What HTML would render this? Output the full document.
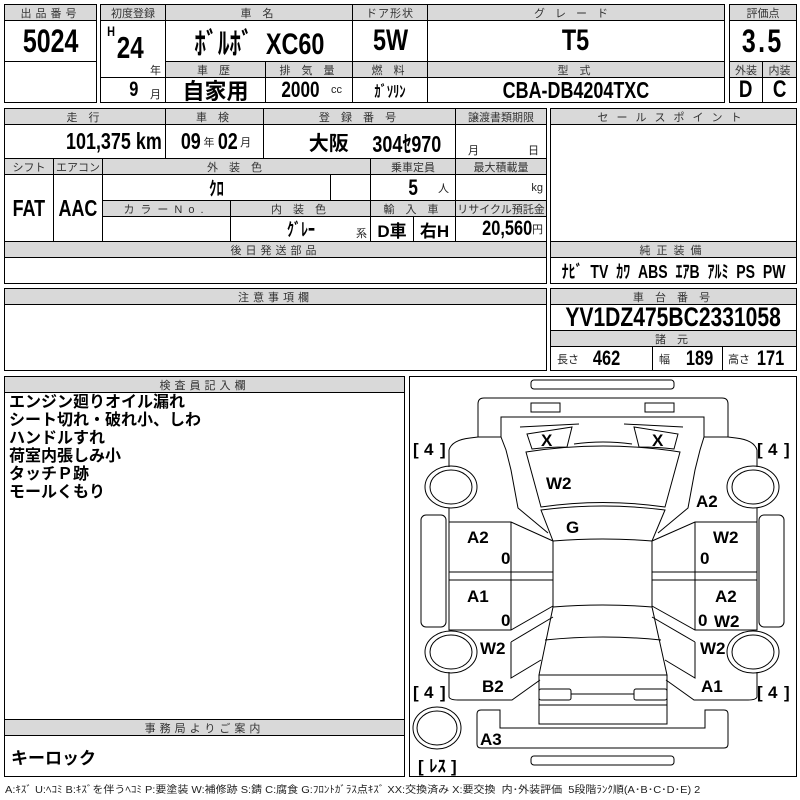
<!DOCTYPE html>
<html><head><meta charset="utf-8"><style>
body{margin:0;width:800px;height:800px;background:#fff;position:relative;overflow:hidden;font-family:"Liberation Sans","Noto Sans CJK JP",sans-serif}
.c{position:absolute;border:1px solid #000;box-sizing:border-box;display:flex;align-items:center;justify-content:center;overflow:visible;white-space:nowrap;background:#fff}
.h{background:#d9d9d9;font-size:11px;color:#333;letter-spacing:4px}
.v{font-family:"Liberation Sans","Noto Sans CJK JP",sans-serif;font-weight:bold;color:#000}
i{font-style:normal;display:inline-block;transform:scaleX(.78);transform-origin:center}
i.r{transform-origin:right center}
.a{position:absolute;white-space:nowrap}
.j{font-family:"Liberation Sans","Noto Sans CJK JP",sans-serif;font-weight:bold}
.s{font-size:11px;font-weight:normal;color:#222}
svg text{font-family:"Liberation Sans","Noto Sans CJK JP",sans-serif;font-weight:bold;font-size:17px}
</style></head><body>

<div class="c h" style="left:4px;top:4px;width:93px;height:17px">出品番号</div>
<div class="c v" style="left:4px;top:20px;width:93px;height:42px;font-size:32px"><i>5024</i></div>
<div class="c" style="left:4px;top:61px;width:93px;height:42px"></div>

<div class="c h" style="left:100px;top:4px;width:66px;height:17px;letter-spacing:0">初度登録</div>
<div class="c h" style="left:165px;top:4px;width:188px;height:17px">車 名</div>
<div class="c h" style="left:352px;top:4px;width:76px;height:17px;letter-spacing:1px">ドア形状</div>
<div class="c h" style="left:427px;top:4px;width:298px;height:17px;letter-spacing:10px">グレード</div>
<div class="c" style="left:100px;top:20px;width:66px;height:58px"></div>
<div class="a v" style="left:106px;top:23px;font-size:14px"><i>H</i></div>
<div class="a v" style="left:113px;top:30px;font-size:31px"><i>24</i></div>
<div class="a s" style="left:150px;top:62px">年</div>
<div class="c" style="left:100px;top:77px;width:66px;height:26px"></div>
<div class="a v" style="left:128px;top:78px;font-size:21px"><i>9</i></div>
<div class="a s" style="left:150px;top:86px">月</div>
<div class="c v" style="left:165px;top:20px;width:188px;height:42px;font-size:30px"><i>ﾎﾞﾙﾎﾞ&nbsp;&nbsp;XC60</i></div>
<div class="c v" style="left:352px;top:20px;width:76px;height:42px;font-size:30px"><i>5W</i></div>
<div class="c v" style="left:427px;top:20px;width:298px;height:42px;font-size:30px"><i>T5</i></div>
<div class="c h" style="left:165px;top:61px;width:101px;height:17px">車 歴</div>
<div class="c h" style="left:265px;top:61px;width:88px;height:17px">排 気 量</div>
<div class="c h" style="left:352px;top:61px;width:76px;height:17px">燃 料</div>
<div class="c h" style="left:427px;top:61px;width:298px;height:17px">型 式</div>
<div class="c j" style="left:165px;top:77px;width:101px;height:26px;font-size:22px">自家用</div>
<div class="c v" style="left:265px;top:77px;width:88px;height:26px;font-size:22px"><i>2000</i>&nbsp;<span class="s">cc</span></div>
<div class="c v" style="left:352px;top:77px;width:76px;height:26px;font-size:16px"><i>ｶﾞｿﾘﾝ</i></div>
<div class="c v" style="left:427px;top:77px;width:298px;height:26px;font-size:23px"><i>CBA-DB4204TXC</i></div>

<div class="c h" style="left:729px;top:4px;width:68px;height:17px;letter-spacing:0">評価点</div>
<div class="c v" style="left:729px;top:20px;width:68px;height:42px;font-size:32px;letter-spacing:3px"><i>3.5</i></div>
<div class="c h" style="left:729px;top:61px;width:34px;height:17px;letter-spacing:0">外装</div>
<div class="c h" style="left:762px;top:61px;width:35px;height:17px;letter-spacing:0">内装</div>
<div class="c v" style="left:729px;top:77px;width:34px;height:26px;font-size:24px"><i>D</i></div>
<div class="c v" style="left:762px;top:77px;width:35px;height:26px;font-size:24px"><i>C</i></div>

<div class="c h" style="left:4px;top:108px;width:162px;height:17px">走 行</div>
<div class="c h" style="left:165px;top:108px;width:99px;height:17px">車 検</div>
<div class="c h" style="left:263px;top:108px;width:193px;height:17px">登 録 番 号</div>
<div class="c h" style="left:455px;top:108px;width:92px;height:17px;letter-spacing:0">譲渡書類期限</div>
<div class="c v" style="left:4px;top:124px;width:162px;height:35px;font-size:23px;justify-content:flex-end;padding-right:3px"><i class="r">101,375 km</i></div>
<div class="c v" style="left:165px;top:124px;width:99px;height:35px;font-size:23px"><i>09</i><span class="s">年</span><i>02</i><span class="s">月</span></div>
<div class="c j" style="left:263px;top:124px;width:193px;height:35px;font-size:20px;justify-content:flex-end;padding-right:14px">大阪<span class="v" style="font-size:23px;margin-left:4px"><i class="r">304ｾ970</i></span></div>
<div class="c" style="left:455px;top:124px;width:92px;height:35px"></div>
<div class="a s" style="left:468px;top:142px">月</div><div class="a s" style="left:528px;top:142px">日</div>

<div class="c h" style="left:4px;top:158px;width:50px;height:17px;letter-spacing:0">シフト</div>
<div class="c h" style="left:53px;top:158px;width:50px;height:17px;letter-spacing:0">エアコン</div>
<div class="c h" style="left:102px;top:158px;width:269px;height:17px">外 装 色</div>
<div class="c h" style="left:370px;top:158px;width:86px;height:17px;letter-spacing:0">乗車定員</div>
<div class="c h" style="left:455px;top:158px;width:92px;height:17px;letter-spacing:0">最大積載量</div>
<div class="c v" style="left:4px;top:174px;width:50px;height:68px;font-size:23px"><i>FAT</i></div>
<div class="c v" style="left:53px;top:174px;width:50px;height:68px;font-size:23px"><i>AAC</i></div>
<div class="c v" style="left:102px;top:174px;width:229px;height:27px;font-size:19px"><i>ｸﾛ</i></div>
<div class="c" style="left:330px;top:174px;width:41px;height:27px"></div>
<div class="c v" style="left:370px;top:174px;width:86px;height:27px;font-size:22px;justify-content:flex-end;padding-right:6px"><i>5</i>&nbsp;&nbsp;&nbsp;<span class="s">人</span></div>
<div class="c" style="left:455px;top:174px;width:92px;height:27px;justify-content:flex-end;padding-right:3px"><span class="s">kg</span></div>
<div class="c h" style="left:102px;top:200px;width:129px;height:17px;letter-spacing:6px">カラーNo.</div>
<div class="c h" style="left:230px;top:200px;width:141px;height:17px">内 装 色</div>
<div class="c h" style="left:370px;top:200px;width:86px;height:17px">輸 入 車</div>
<div class="c h" style="left:455px;top:200px;width:92px;height:17px;letter-spacing:0">リサイクル預託金</div>
<div class="c" style="left:102px;top:216px;width:129px;height:26px"></div>
<div class="c v" style="left:230px;top:216px;width:141px;height:26px;font-size:18px"><i>ｸﾞﾚｰ</i></div>
<div class="a s" style="left:356px;top:225px">系</div>
<div class="c j" style="left:370px;top:216px;width:44px;height:26px;font-size:17px">D車</div>
<div class="c j" style="left:413px;top:216px;width:43px;height:26px;font-size:17px">右H</div>
<div class="c v" style="left:455px;top:216px;width:92px;height:26px;font-size:21px;justify-content:flex-end;padding-right:3px"><i class="r">20,560</i><span class="s">円</span></div>
<div class="c h" style="left:4px;top:241px;width:543px;height:17px">後日発送部品</div>
<div class="c" style="left:4px;top:257px;width:543px;height:27px"></div>

<div class="c h" style="left:550px;top:108px;width:247px;height:17px;letter-spacing:8px">セールスポイント</div>
<div class="c" style="left:550px;top:124px;width:247px;height:118px"></div>
<div class="c h" style="left:550px;top:241px;width:247px;height:17px;letter-spacing:6px">純正装備</div>
<div class="c v" style="left:550px;top:257px;width:247px;height:27px;font-size:18px;word-spacing:5px"><i>ﾅﾋﾞ TV ｶﾜ ABS ｴｱB ｱﾙﾐ PS PW</i></div>

<div class="c h" style="left:4px;top:288px;width:543px;height:17px">注意事項欄</div>
<div class="c" style="left:4px;top:304px;width:543px;height:67px"></div>
<div class="c h" style="left:550px;top:288px;width:247px;height:17px">車 台 番 号</div>
<div class="c v" style="left:550px;top:304px;width:247px;height:27px;font-size:27px"><i>YV1DZ475BC2331058</i></div>
<div class="c h" style="left:550px;top:330px;width:247px;height:17px">諸 元</div>
<div class="c" style="left:550px;top:346px;width:103px;height:25px;justify-content:flex-start;padding-left:6px"><span class="s">長さ</span><span class="v" style="font-size:21px;margin-left:10px"><i>462</i></span></div>
<div class="c" style="left:652px;top:346px;width:71px;height:25px;justify-content:flex-start;padding-left:6px"><span class="s">幅</span><span class="v" style="font-size:21px;margin-left:12px"><i>189</i></span></div>
<div class="c" style="left:722px;top:346px;width:75px;height:25px;justify-content:flex-start;padding-left:5px"><span class="s">高さ</span><span class="v" style="font-size:21px;margin-left:3px"><i>171</i></span></div>

<div class="c h" style="left:4px;top:376px;width:401px;height:17px">検査員記入欄</div>
<div class="c" style="left:4px;top:392px;width:401px;height:328px"></div>
<div class="a j" style="left:9px;top:394px;font-size:16px;line-height:18px">エンジン廻りオイル漏れ<br>シート切れ・破れ小、しわ<br>ハンドルすれ<br>荷室内張しみ小<br>タッチＰ跡<br>モールくもり</div>
<div class="c h" style="left:4px;top:719px;width:401px;height:17px">事務局よりご案内</div>
<div class="c" style="left:4px;top:735px;width:401px;height:42px;justify-content:flex-start;padding-left:6px"><span class="j" style="font-size:17px">キーロック</span></div>

<div class="c" style="left:409px;top:376px;width:388px;height:401px"></div>
<svg class="a" style="left:0;top:0" width="800" height="800" viewBox="0 0 800 800" fill="none" stroke="#000" stroke-width="1">
<rect x="531" y="380" width="143" height="9" rx="3"/>
<path d="M478 437 V404 Q478 398 484 398 H722 Q728 398 728 404 V437"/>
<path d="M501 437 V417 H704 V437"/>
<rect x="531" y="403" width="29" height="9"/><rect x="645" y="403" width="29" height="9"/>
<path d="M520 427 L579 424"/><path d="M624 424 L683 427"/>
<path d="M527 434 L572 427 L567 447 Q548 447 532 449 Z"/>
<path d="M634 427 L678 434 L674 449 Q658 447 639 447 Z"/>
<path d="M574 444 Q603 440 632 444"/>
<path d="M526 452 Q603 440 680 452 L665 507 Q603 498 541 507 Z"/>
<path d="M541 510 Q603 502 665 510 L652 541 Q603 537 553 541 Z"/>
<path d="M449 467 V450 Q452 440 470 438 L478 437 Q500 437 501 437 L506 450 L511 470 L518 508 L548 533"/>
<path d="M757 467 V450 Q754 440 736 438 L728 437 Q706 437 704 437 L700 450 L695 470 L688 508 L658 533"/>
<ellipse cx="451" cy="487" rx="26" ry="21"/><ellipse cx="451" cy="487" rx="21" ry="17"/>
<ellipse cx="753" cy="487" rx="26" ry="21"/><ellipse cx="753" cy="487" rx="21" ry="17"/>
<rect x="421" y="515" width="25" height="112" rx="5"/><rect x="759" y="515" width="25" height="112" rx="5"/>
<path d="M449 508 V630 L511 630 L553 606"/><path d="M757 508 V630 L695 630 L652 606"/>
<path d="M449 522 H511 L553 541"/><path d="M757 522 H695 L652 541"/>
<path d="M511 522 V630"/><path d="M695 522 V630"/>
<path d="M449 572 H553"/><path d="M449 580 H553"/><path d="M652 572 H757"/><path d="M652 580 H757"/>
<path d="M553 541 V607"/><path d="M652 541 V607"/>
<path d="M553 607 Q603 603 652 607 L667 675 L539 675 Z"/>
<path d="M545 640 Q603 634 661 640"/>
<path d="M511 642 L553 617"/><path d="M511 642 V678 L541 660"/><path d="M695 642 L652 617"/><path d="M695 642 V678 L665 660"/>
<path d="M449 672 V697 Q450 700 458 700 H512 L540 680"/><path d="M757 672 V697 Q756 700 748 700 H694 L666 680"/>
<ellipse cx="451" cy="652" rx="26" ry="21"/><ellipse cx="451" cy="652" rx="21" ry="17"/>
<ellipse cx="753" cy="652" rx="26" ry="21"/><ellipse cx="753" cy="652" rx="21" ry="17"/>
<path d="M539 675 V724 H667 V675"/>
<rect x="539" y="689" width="32" height="11" rx="2"/><rect x="634" y="689" width="33" height="11" rx="2"/>
<path d="M571 694 H634"/><path d="M539 705 H667"/>
<path d="M481 710 H500 V728 H705 V710 H724 Q728 710 728 714 V744 Q728 748 724 748 H481 Q477 748 477 744 V714 Q477 710 481 710 Z"/>
<rect x="531" y="756" width="143" height="9" rx="3"/>
<ellipse cx="437" cy="728" rx="24" ry="21"/><ellipse cx="437" cy="728" rx="20" ry="17"/>
<g fill="#000" stroke="none">
<text x="413" y="455" font-weight="normal">[</text><text x="424" y="455">4</text><text x="440" y="455" font-weight="normal">]</text>
<text x="757" y="455" font-weight="normal">[</text><text x="768" y="455">4</text><text x="784" y="455" font-weight="normal">]</text>
<text x="413" y="698" font-weight="normal">[</text><text x="424" y="698">4</text><text x="440" y="698" font-weight="normal">]</text>
<text x="757" y="698" font-weight="normal">[</text><text x="768" y="698">4</text><text x="784" y="698" font-weight="normal">]</text>
<text x="418" y="772" font-weight="normal">[</text><text x="429" y="772" font-size="14">ﾚｽ</text><text x="451" y="772" font-weight="normal">]</text>
<text x="541" y="446">X</text><text x="652" y="446">X</text>
<text x="546" y="489">W2</text><text x="696" y="507">A2</text><text x="566" y="533">G</text>
<text x="467" y="543">A2</text><text x="713" y="543">W2</text>
<text x="501" y="564" font-size="12" font-weight="normal">0</text><text x="700" y="564" font-size="12" font-weight="normal">0</text>
<text x="467" y="602">A1</text><text x="715" y="602">A2</text>
<text x="501" y="626" font-size="12" font-weight="normal">0</text><text x="698" y="626" font-size="12" font-weight="normal">0</text>
<text x="714" y="627">W2</text>
<text x="480" y="654">W2</text><text x="700" y="654">W2</text>
<text x="482" y="692">B2</text><text x="701" y="692">A1</text>
<text x="480" y="745">A3</text>
</g>
</svg>
<div class="a" style="left:5px;top:781px;font-size:10px;color:#222;transform:scaleX(1.1);transform-origin:0 0">A:ｷｽﾞ U:ﾍｺﾐ B:ｷｽﾞを伴うﾍｺﾐ P:要塗装 W:補修跡 S:錆 C:腐食 G:ﾌﾛﾝﾄｶﾞﾗｽ点ｷｽﾞ XX:交換済み X:要交換 &nbsp;内･外装評価 &nbsp;5段階ﾗﾝｸ順(A･B･C･D･E) 2</div>
</body></html>
